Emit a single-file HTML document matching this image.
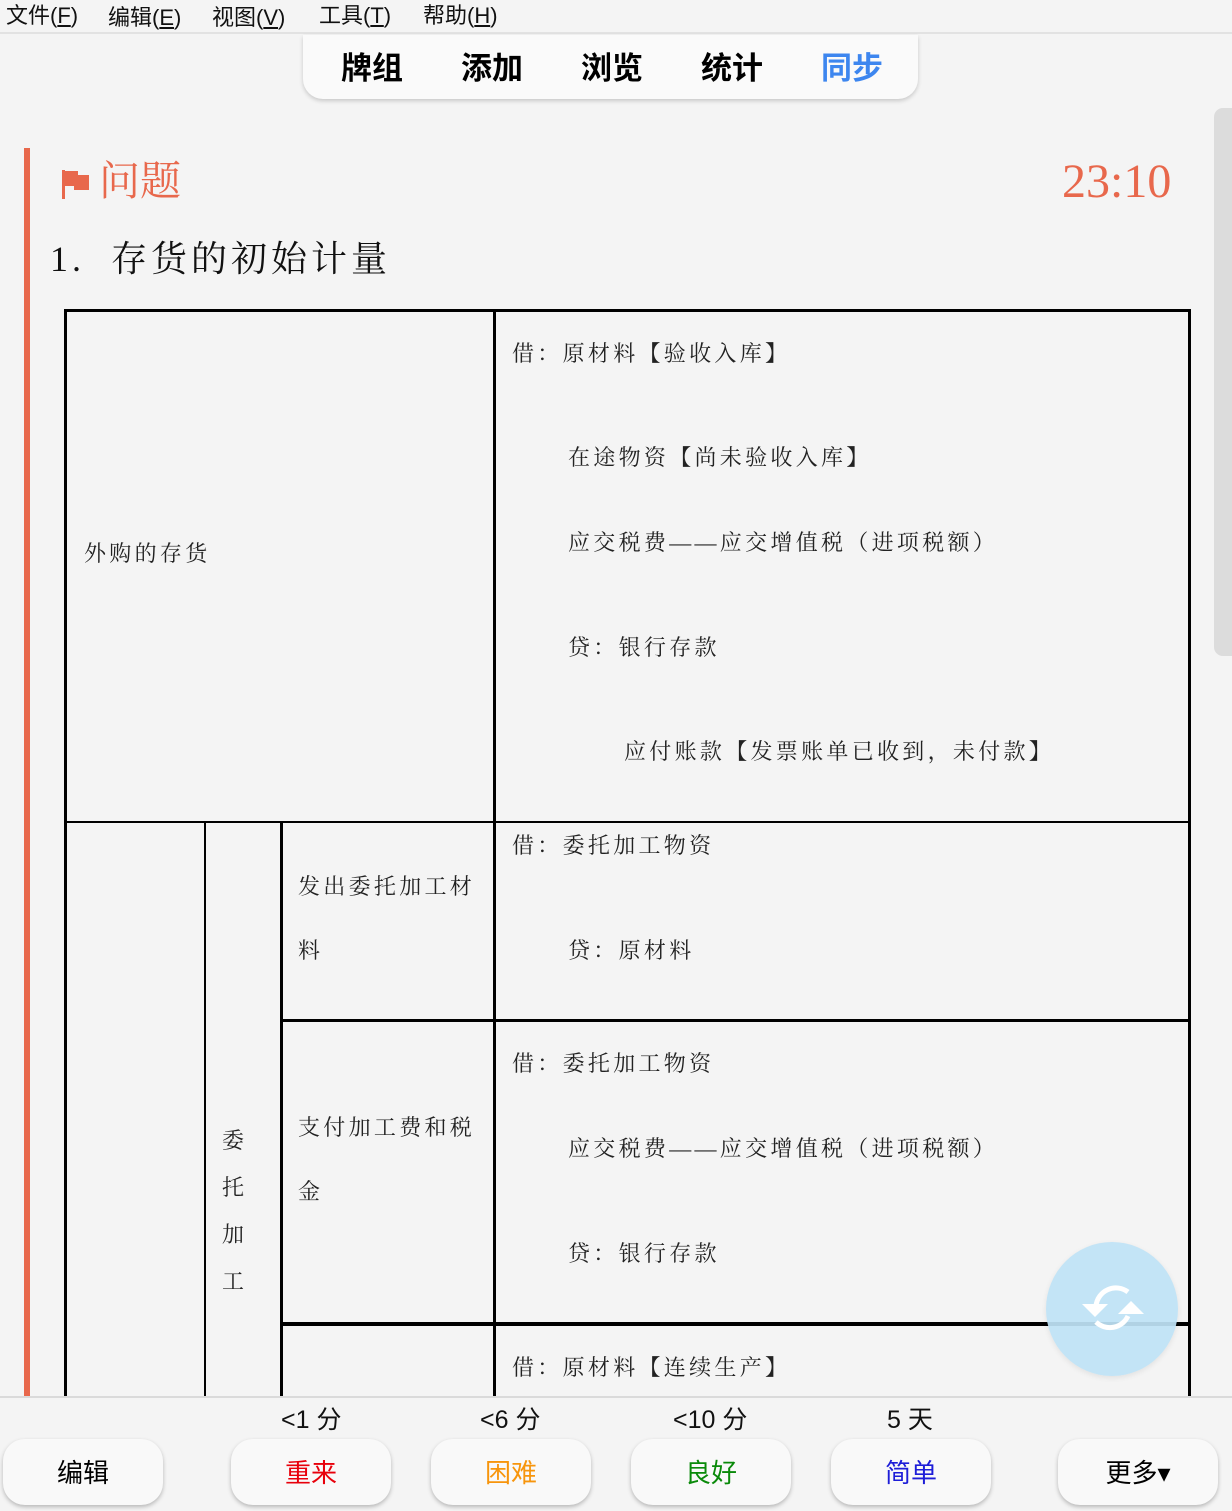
<!DOCTYPE html>
<html><head><meta charset="utf-8"><style>
*{margin:0;padding:0;box-sizing:border-box}
body{width:1232px;height:1511px;background:#f4f4f4;position:relative;overflow:hidden;font-family:"Liberation Sans","Noto Sans CJK SC",sans-serif;color:#000}
.a{position:absolute;white-space:nowrap}
.s{font-family:"Liberation Serif","Noto Serif CJK SC",serif;font-size:22px;color:#222;letter-spacing:3.3px}
.l{position:absolute;background:#000}
.btn{position:absolute;top:1439px;width:160px;height:66px;background:#f9f9f9;border-radius:22px;box-shadow:0 2px 4px rgba(0,0,0,.25);font-size:26px;text-align:center;line-height:68px}
.t{position:absolute;top:1400px;font-size:25px;color:#111}
</style></head><body>
<div class="a" style="left:0;top:0;width:1232px;height:34px;border-bottom:2px solid #e2e2e2;background:#f4f4f4"></div>
<div class="a" style="left:6px;top:0;font-size:22px;line-height:32px;color:#111">文件(<u>F</u>)</div>
<div class="a" style="left:108px;top:2px;font-size:22px;line-height:32px;color:#111">编辑(<u>E</u>)</div>
<div class="a" style="left:212px;top:2px;font-size:22px;line-height:32px;color:#111">视图(<u>V</u>)</div>
<div class="a" style="left:319px;top:0;font-size:22px;line-height:32px;color:#111">工具(<u>T</u>)</div>
<div class="a" style="left:423px;top:0;font-size:22px;line-height:32px;color:#111">帮助(<u>H</u>)</div>

<div class="a" style="left:303px;top:35px;width:615px;height:64px;background:#fafafa;border-radius:0 0 20px 20px;box-shadow:0 2px 4px rgba(0,0,0,.18)"></div>
<div class="a" style="left:341px;top:49px;font-size:31px;font-weight:bold;line-height:40px">牌组</div>
<div class="a" style="left:461px;top:49px;font-size:31px;font-weight:bold;line-height:40px">添加</div>
<div class="a" style="left:581px;top:49px;font-size:31px;font-weight:bold;line-height:40px">浏览</div>
<div class="a" style="left:701px;top:49px;font-size:31px;font-weight:bold;line-height:40px">统计</div>
<div class="a" style="left:821px;top:49px;font-size:31px;font-weight:bold;line-height:40px;color:#3d86ef">同步</div>

<div class="a" style="left:1214px;top:108px;width:18px;height:548px;background:#dcdcdc;border-radius:9px 0 0 9px"></div>

<div class="a" style="left:24px;top:148px;width:6px;height:1250px;background:#e8684c"></div>
<svg class="a" style="left:60px;top:168px" width="30" height="32"><path d="M2 2h3v29H2z M5 3h13v4h11v15H14v-4H5z" fill="#e8684c"/></svg>
<div class="a" style="left:99px;top:158px;font-size:41px;line-height:46px;color:#e8684c;font-family:'Liberation Serif','Noto Serif CJK SC',serif">问题</div>
<div class="a" style="left:1062px;top:155px;font-size:48px;line-height:54px;color:#e8684c;font-family:'Liberation Serif',serif">23:10</div>
<div class="a" style="left:50px;top:236px;font-size:36px;line-height:46px;color:#111;font-family:'Liberation Serif','Noto Serif CJK SC',serif;letter-spacing:4px">1.&nbsp; 存货的初始计量</div>

<div class="l" style="left:64px;top:309px;width:1127px;height:3px"></div>
<div class="l" style="left:64px;top:309px;width:3px;height:1100px"></div>
<div class="l" style="left:1188px;top:309px;width:3px;height:1100px"></div>
<div class="l" style="left:493px;top:309px;width:3px;height:1100px"></div>
<div class="l" style="left:64px;top:821px;width:1127px;height:2px"></div>
<div class="l" style="left:204px;top:821px;width:2px;height:600px"></div>
<div class="l" style="left:280px;top:821px;width:3px;height:600px"></div>
<div class="l" style="left:280px;top:1019px;width:911px;height:3px"></div>
<div class="l" style="left:280px;top:1322px;width:911px;height:4px"></div>

<div class="a s" style="left:84px;top:537px">外购的存货</div>
<div class="a s" style="left:512px;top:337px">借：原材料【验收入库】</div>
<div class="a s" style="left:568px;top:441px">在途物资【尚未验收入库】</div>
<div class="a s" style="left:568px;top:526px">应交税费——应交增值税（进项税额）</div>
<div class="a s" style="left:568px;top:631px">贷：银行存款</div>
<div class="a s" style="left:624px;top:735px">应付账款【发票账单已收到，未付款】</div>

<div class="a s" style="left:298px;top:870px">发出委托加工材</div>
<div class="a s" style="left:298px;top:934px">料</div>
<div class="a s" style="left:512px;top:829px">借：委托加工物资</div>
<div class="a s" style="left:568px;top:934px">贷：原材料</div>

<div class="a s" style="left:298px;top:1111px">支付加工费和税</div>
<div class="a s" style="left:298px;top:1175px">金</div>
<div class="a s" style="left:512px;top:1047px">借：委托加工物资</div>
<div class="a s" style="left:568px;top:1132px">应交税费——应交增值税（进项税额）</div>
<div class="a s" style="left:568px;top:1237px">贷：银行存款</div>
<div class="a s" style="left:222px;top:1117px;line-height:47px;white-space:normal;width:24px">委托加工</div>

<div class="a s" style="left:512px;top:1351px">借：原材料【连续生产】</div>

<div class="a" style="left:1046px;top:1242px;width:132px;height:134px;border-radius:50%;background:rgba(190,226,245,.93);box-shadow:0 2px 6px rgba(0,0,0,.08)"></div>
<svg class="a" style="left:1078px;top:1278px" width="70" height="66" viewBox="0 0 70 66"><g fill="none" stroke="#fff" stroke-width="5"><path d="M50 14 A20 20 0 0 0 18 28"/><path d="M18 44 A20 20 0 0 0 50 38"/></g><path d="M4 26h26l-13 13z" fill="#fff"/><path d="M40 40h26l-13-13z" fill="#fff" transform="translate(0,-4)"/></svg>

<div class="a" style="left:0;top:1396px;width:1232px;height:115px;background:#f4f4f4;border-top:2px solid #dadada"></div>
<div class="t" style="left:281px">&lt;1 分</div>
<div class="t" style="left:480px">&lt;6 分</div>
<div class="t" style="left:673px">&lt;10 分</div>
<div class="t" style="left:887px">5 天</div>
<div class="btn" style="left:3px">编辑</div>
<div class="btn" style="left:231px;color:#e8000b">重来</div>
<div class="btn" style="left:431px;color:#f7950c">困难</div>
<div class="btn" style="left:631px;color:#0a8a0a">良好</div>
<div class="btn" style="left:831px;color:#1d1dd8">简单</div>
<div class="btn" style="left:1058px">更多▾</div>
</body></html>
